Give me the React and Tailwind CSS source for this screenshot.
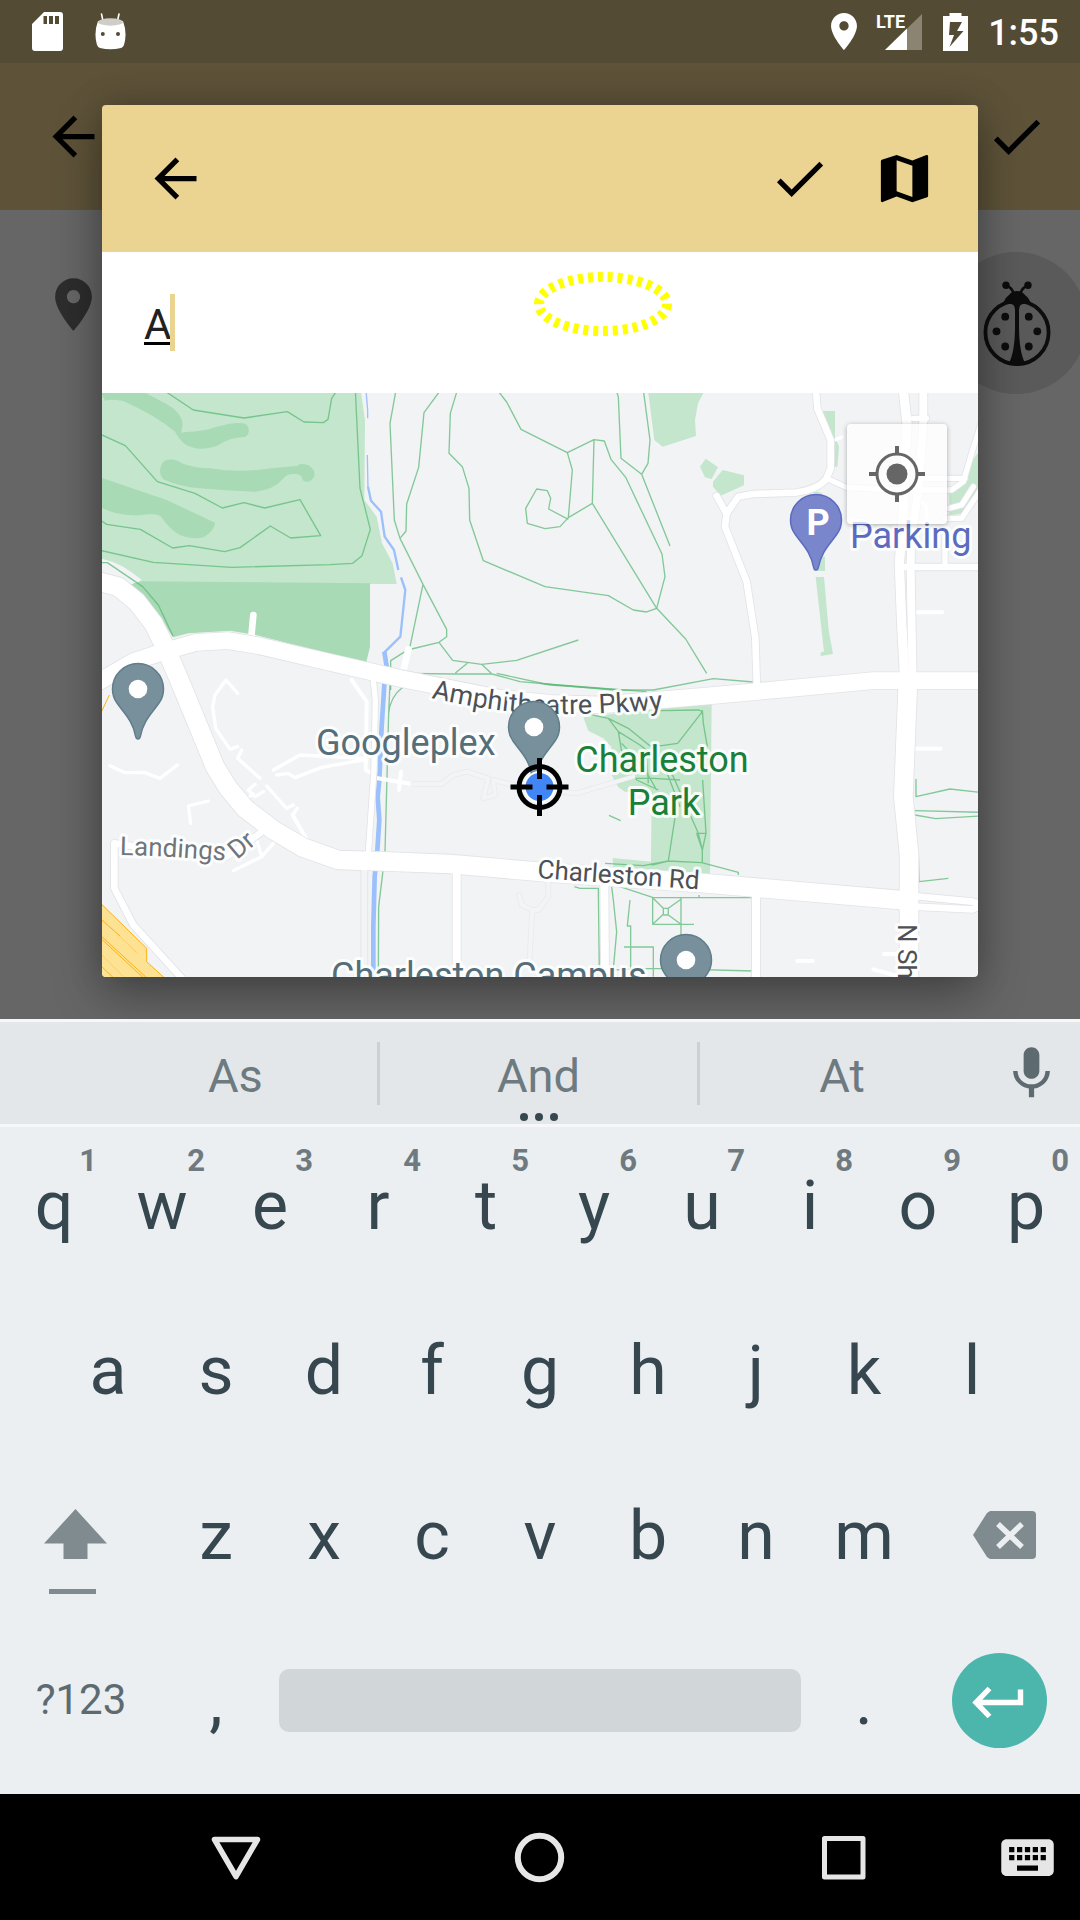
import React from "react";

const NW = "translate(-6 -9)";
const NE = "translate(1314 -9)";
const SW = "translate(-6 861)";
const SE = "translate(1314 861)";

function Icon({ d, className = "size-[63px]" }) {
  return (
    <svg viewBox="0 0 24 24" className={className} fill="currentColor" aria-hidden="true">
      <path d={d} />
    </svg>
  );
}

const ARROW = "M20 11H7.83l5.59-5.59L12 4l-8 8 8 8 1.41-1.41L7.83 13H20v-2z";
const CHECK = "M9 16.17L4.83 12l-1.42 1.41L9 19 21 7l-1.41-1.41z";
const MAP = "M20.5 3l-.16.03L15 5.1 9 3 3.36 4.9c-.21.07-.36.25-.36.48V20.5c0 .28.22.5.5.5l.16-.03L9 18.9l6 2.1 5.64-1.9c.21-.07.36-.25.36-.48V3.5c0-.28-.22-.5-.5-.5zM15 19l-6-2.11V5l6 2.11V19z";
const PLACE = "M12 2C8.13 2 5 5.13 5 9c0 5.25 7 13 7 13s7-7.75 7-13c0-3.87-3.13-7-7-7zm0 9.500c-1.38 0-2.5-1.12-2.5-2.5s1.12-2.5 2.5-2.5 2.5 1.12 2.5 2.5-1.12 2.5-2.5 2.5z";
const MIC = "M12 14c1.66 0 2.99-1.34 2.99-3L15 5c0-1.66-1.34-3-3-3S9 3.34 9 5v6c0 1.66 1.34 3 3 3zm5.3-3c0 3-2.54 5.1-5.3 5.1S6.7 14 6.7 11H5c0 3.41 2.72 6.23 6 6.72V21h2v-3.28c3.28-.48 6-3.3 6-6.72h-1.7z";
const KEYBOARD = "M20 5H4c-1.1 0-1.99.9-1.99 2L2 17c0 1.1.9 2 2 2h16c1.1 0 2-.9 2-2V7c0-1.1-.9-2-2-2zm-9 3h2v2h-2V8zm0 3h2v2h-2v-2zM8 8h2v2H8V8zm0 3h2v2H8v-2zm-1 2H5v-2h2v2zm0-3H5V8h2v2zm9 7H8v-2h8v2zm0-4h-2v-2h2v2zm0-3h-2V8h2v2zm3 3h-2v-2h2v2zm0-3h-2V8h2v2z";

function StatusBar() {
  return (
    <header className="flex h-[63px] items-center justify-between bg-[#544b35] pr-[21px] pl-8 text-white">
      <div className="flex items-center gap-8">
        <svg viewBox="0 0 31 39" className="h-[39px] w-[31px]" aria-hidden="true">
          <path fill="#fff" fillRule="evenodd" d="M12 0H28Q31 0 31 3V36Q31 39 28 39H3Q0 39 0 36V12ZM11.500 4V12H15V4ZM17 4V12H21V4ZM23 4V12H27V4Z" />
        </svg>
        <svg viewBox="0 0 31 37" className="h-[37px] w-[31px]" aria-hidden="true">
          <path d="M6.500 1L8 8M24 1L22.500 8" stroke="#fff" strokeWidth="1.600" strokeLinecap="round" />
          <path d="M3 8Q-1.500 20 2 32Q3 34.500 5 35Q15.500 37.500 26 35Q28 34.500 29 32Q32.500 20 28 8Z" fill="#fff" />
          <ellipse cx="15.500" cy="9" rx="12.500" ry="3.700" fill="#cfcdc7" />
          <circle cx="7.800" cy="21" r="2" fill="#544b35" />
          <circle cx="23" cy="21" r="2" fill="#544b35" />
        </svg>
      </div>
      <div className="flex items-center">
        <svg viewBox="5 2 14 20" className="mr-[19px] h-[37px] w-[26px]" aria-hidden="true">
          <path fill="#fff" d={PLACE} />
        </svg>
        <svg viewBox="0 0 46 38" className="mr-[21px] h-[38px] w-[46px]" aria-label="LTE signal">
          <path d="M46 1V37H9Z" fill="#8b8472" />
          <path d="M31 15.600V37H9Z" fill="#fff" />
          <text x="0" y="15" fontFamily="Roboto, sans-serif" fontWeight="700" fontSize="18" fill="#fff">LTE</text>
        </svg>
        <svg viewBox="0 0 25 38" className="mr-5 h-[38px] w-[25px]" aria-hidden="true">
          <path fill="#fff" fillRule="evenodd" d="M6.500 0H18.500V3H25V38H0V3H6.500ZM7 9L6 22H11L6.500 34L20.500 18H14L19 9Z" />
        </svg>
        <span className="pt-[3px] text-[36px] leading-none font-medium">1:55</span>
      </div>
    </header>
  );
}

function Ladybug() {
  return (
    <svg viewBox="-1 0 142 142" className="size-[142px]" aria-hidden="true">
      <g fill="#0d0d0d">
        <circle cx="71" cy="80.500" r="31.600" fill="none" stroke="#0d0d0d" strokeWidth="3.800" />
        <path d="M57 53Q58 46.500 63 43Q66 39 71 39Q76 39 79 43Q84 46.500 85 53Q79 50.500 74.500 53Q73 55 73 58V75Q73.200 100 79 111Q75 114 71 114Q67 114 63 111Q68.800 100 69 75V58Q69 55 67.500 53Q63 50.500 57 53Z" />
        <circle cx="60" cy="33.300" r="3.700" />
        <circle cx="82" cy="33.300" r="3.700" />
        <path d="M61 34Q66.500 36 67.500 42M81 34Q75.500 36 74.500 42" fill="none" stroke="#0d0d0d" strokeWidth="2.500" />
        <circle cx="59.200" cy="64.700" r="3.900" />
        <circle cx="82.800" cy="64.700" r="3.900" />
        <circle cx="50.500" cy="79.300" r="3.900" />
        <circle cx="91.300" cy="79.300" r="3.900" />
        <circle cx="59.200" cy="94.500" r="3.900" />
        <circle cx="82.800" cy="94.500" r="3.900" />
      </g>
    </svg>
  );
}

function PageBehind() {
  return (
    <div className="col-start-1 row-start-1 bg-[#666]">
      <div className="flex h-[147px] items-center justify-between bg-[#5e5339] pr-8 pl-[42px]">
        <button aria-label="Back"><Icon d={ARROW} /></button>
        <button aria-label="Done"><Icon d={CHECK} /></button>
      </div>
      <div className="flex items-start justify-between pt-[42px] pl-[42px]">
        <span className="mt-[21px] text-[#2d2d2d]"><Icon d={PLACE} /></span>
        <button aria-label="Add sighting" className="-mr-[7px] rounded-full bg-[#5a5a5a]"><Ladybug /></button>
      </div>
    </div>
  );
}

const parks = [
  [NW, "#c3e6cc", "M0 0H782L795 90L793 330L830 380L846 460L878 520L890 582H126L70 530L0 505Z"],
  [NW, "#a8dab5", "M90 582L126 574L810 580V770L798 820L465 734L390 722L265 730L219 742L170 665Z"],
  [NW, "#a8dab5", "M0 0H120L195 40Q245 65 248 105L243 128L260 126Q310 125 345 112Q400 96 430 100Q448 104 446 125Q444 142 425 142Q390 143 350 168Q300 185 260 166Q240 153 225 125Q165 75 70 33Q30 25 15 33Z"],
  [NW, "#a8dab5", "M200 210Q225 205 245 220Q285 235 330 235Q400 247 470 240Q530 233 590 228Q600 217 625 226Q648 240 642 260Q625 285 608 270Q605 250 585 252Q560 250 548 268Q520 300 465 305Q380 303 300 295Q240 290 195 270Q180 263 180 240Q185 213 200 210Z"],
  [NW, "#a8dab5", "M0 262L200 330L345 398Q345 420 310 442Q280 450 240 435Q210 420 182 378Q165 368 125 375Q50 380 0 350Z"],
  [NE, "#c3e6cc", "M324 0H495L474 40L465 90L468 138L368 170L343 150Z"],
  [NE, "#c3e6cc", "M497 206L534 232L515 267L495 262L480 230Z"],
  [NE, "#c3e6cc", "M548 240L612 256V286L542 317L519 290V275Z"],
  [NE, "#c3e6cc", "M847 63H885V140L897 170L892 230H884V160L870 140Z"],
  [NE, "#c3e6cc", "M825 500H855V543H820ZM827 561H852L866 720L879 792L842 798V787L852 785Z"],
  [NE, "#c3e6cc", "M815 310Q830 298 850 312ZM1228 310L1320 180V310L1265 370L1228 378Z"],
  [SE, "#c3e6cc", "M130 112L360 85L515 67L510 582L220 560L218 534L333 545L335 340L255 335L235 322L215 285L214 200L190 175L145 152Z"],
];

const trails = [
  [NW, "M190 0L280 60L432 84L562 65L612 96L670 98L684 88L695 25L712 0M766 0L780 295L811 418L786 497L758 520L690 524L395 532L160 517L0 481M0 132L76 167L172 275L285 310L367 354L432 338L494 354L600 329L662 437L572 444L511 408L420 473L374 485L268 467L218 474L121 418L20 403L0 390"],
  [NW, "M888 0L870 100L883 390L900 445L969 583L1040 718V740L1017 757L935 777M1022 0L972 68L956 232L920 342L918 423L900 445M969 583L930 770M1072 0L1051 70L1047 190L1087 230L1107 295L1109 390L1150 512L1335 590L1525 617L1600 660L1640 666L1670 655M1192 0L1220 36L1263 118L1402 188L1482 149M1017 757L1058 811L1145 823L1250 811L1435 750M1145 823L1176 852L1260 875L1540 900M1102 820L1066 849M920 850L1066 852L1176 852M915 785L872 812V900"],
  [NW, "M1402 188L1417 240L1405 383L1477 340L1482 149L1513 153L1533 208L1577 262L1686 492L1695 560L1670 655L1757 747L1820 850M1477 340L1670 655M1405 383L1380 410L1335 416L1282 400L1277 355L1310 297L1342 302L1352 325L1346 357L1405 388"],
  [NE, "M228 0L235 20L243 205L305 253L324 220L330 150L310 0M305 253L390 468M0 880L250 900L340 900L520 866L640 876"],
  [SW, "M870 10L866 100L855 515L848 580L836 680L835 890M866 100Q870 50 910 20M1190 -20L1350 15L1640 35"],
  [SE, "M110 95L205 115L265 145L345 210L400 290L475 460L487 510V550M205 115L235 155L300 195L370 250L420 380M235 155L245 215L290 300L355 330M245 190L310 260L350 330M290 295H340L420 300M320 235L325 310M325 195L365 197L413 190L487 95L477 90L360 92M487 90L490 130L502 200M488 300L498 460H470L487 510L498 460M407 400L385 543L335 555M195 550L310 557L385 543L485 548L595 577V585M103 620L120 625H175L178 880M215 620L220 660L230 755L218 890M240 620L340 653H640M270 660L262 738H272V870M338 653V733H462M423 655V800M338 653L370 685V703L338 733M423 658L385 685V705L423 733M370 685H385M370 705H385M252 801H340V890M215 870L340 865L640 873M477 655V645"],
  [SE, "M1128 297V350L1230 327L1320 337M1125 392L1320 397M1125 405L1187 416L1320 408M1135 520L1137 605L1225 595M207 406L242 422"],
];

const localRoads = [
  [SW, 10, "M413 40L378 0L345 45L338 80L347 145L390 208L413 200M425 210L413 235L480 295M500 318L560 385L580 375M592 385L578 405M465 313L445 330L465 350L490 335M440 357L460 342M30 257L75 278L132 277L180 295L232 255M325 363L265 378L272 430M520 270L600 225L790 235M530 285L565 280L585 293L665 262L790 240M400 572L485 530L520 490M485 530L470 480"],
  [SW, 12, "M578 405L630 495M755 0L800 65L797 270L825 285M825 293L935 312M903 275L897 330"],
  [NE, 10, "M872 155L905 142M1125 320L1160 350V430"],
  [NE, 12, "M1120 667H1207"],
  [SE, 12, "M1125 206H1202M772 843H818M1032 822H1080M1000 868L1080 890"],
  [NW, 20, "M460 675L453 750M925 778L905 865"],
];

const roads = [
  [SW, 12, "M940 312H1025L1060 285L1100 275L1165 295L1150 355L1185 345L1180 305M1180 300L1300 330M1330 330L1430 340L1600 290M1258 645L1265 675L1297 690L1288 850M1345 600V650L1315 690H1297"],
  [SW, 16, "M820 0L826 60L822 270L805 520"],
  [SW, 18, "M793 560V900"],
  [SW, 20, "M43 490V625L100 735L255 905M43 490L200 515L380 530L480 460"],
  [SW, 24, "M1070 560V900"],
  [NE, 20, "M828 0L832 55L872 150V235L858 268Q830 300 765 308L640 312L595 320L560 370L555 410L620 575L646 745L651 900M530 318L560 372"],
  [NE, 16, "M860 265L920 292L1080 300H1235L1270 275L1295 190L1325 95M1120 85H1160M1140 265H1275M1215 440V530M1225 355L1265 345L1300 290M1215 385H1265L1325 295"],
  [NE, 20, "M1080 531H1330"],
  [NE, 24, "M1150 0V95L1135 300L1113 450L1112 540L1118 880"],
  [NE, 28, "M1090 0L1101 100L1088 400L1078 520L1085 700L1095 880"],
  [SE, 24, "M193 610L195 900M648 640V900"],
  [SE, 20, "M1120 648L1298 665L1330 675M1120 680L1298 688L1330 675"],
  [SE, 56, "M1104 0L1090 350L1107 520V900"],
  [SW, 56, "M-20 -300L55 -280L110 -235L160 -170L195 -100L238 0L345 260L385 325L435 385L520 450L610 503L715 540L850 544L1050 552L1350 578L1820 610L2400 660"],
  [NW, 50, "M-20 885L100 815L200 782L290 757L385 752L480 768L680 815L900 865L1050 895L1200 925L1350 940L1500 945L1835 917L2040 898L2320 872L2660 872"],
];

function Pin({ x, y, fill = "#78909c", stroke = "#607d8b", children }) {
  return (
    <g transform={`translate(${x} ${y})`}>
      <path
        d="M0 50Q-2 50 -2.500 47C-5 32 -14 24 -21 14Q-25.500 8 -25.500 0A25.500 25.500 0 0 1 25.500 0Q25.500 8 21 14C14 24 5 32 2.500 47Q2 50 0 50Z"
        fill={fill}
        stroke={stroke}
        strokeWidth="1.500"
      />
      {children || <circle r="9.300" fill="#fff" />}
    </g>
  );
}

function MapView() {
  return (
    <div className="relative">
      <svg viewBox="0 0 876 584" className="block h-auto w-full" fontFamily="Roboto, sans-serif" role="img" aria-label="Map around Charleston Park">
        <rect width="876" height="584" fill="#f1f3f5" />
        <g transform="scale(0.33333)" fill="none" strokeLinejoin="round">
          {parks.map(([t, c, d], i) => <path key={i} transform={t} d={d} fill={c} />)}
          <path transform={NW} d="M0 505Q60 515 126 570L90 584L0 545Z" fill="#f1f3f5" />
          <g stroke="#9bc0fb">
            <path transform={NW} d="M798 0L803 60V85M802 195L804 295" strokeWidth="4" />
            <path transform={NW} d="M804 290L813 332L843 365L854 440L882 480L895 540M903 562L916 600L901 740L853 787" strokeWidth="7" />
            <path transform={SW} d="M853 -85L860 -40L853 15L845 140L838 300L833 350L838 420L832 510L824 590L820 740V900" strokeWidth="14" />
          </g>
          <g strokeWidth="4" stroke="#5dba78" strokeOpacity="0.75">
            {trails.map(([t, d], i) => <path key={i} transform={t} d={d} />)}
          </g>
          <g transform={SW}>
            <path d="M0 668L140 805V845L198 898H0Z" fill="#fde293" />
            <path d="M0 668L140 805V845L198 898M0 715L60 768M0 765L145 898M0 773L135 898M0 855L45 898M0 105L28 45" stroke="#fbb117" strokeWidth="3" />
            <path d="M50 760L110 818M0 820L70 890" stroke="#fbc34a" strokeWidth="2" />
          </g>
          <g stroke="#fff" strokeLinecap="round">
            {localRoads.map(([t, w, d], i) => <path key={i} transform={t} d={d} strokeWidth={w} />)}
          </g>
          <g stroke="#e2e3e7" strokeLinecap="round">
            {roads.map(([t, w, d], i) => (
              <path key={i} transform={t} d={d} strokeWidth={w + 5} strokeOpacity={i === 0 ? 0.5 : 1} />
            ))}
          </g>
          {roads.map(([t, w, d], i) => (
            <path key={i} transform={t} d={d} strokeWidth={w} strokeLinecap="round" stroke={i === 0 || i === 2 ? "#f3f4f6" : "#fff"} />
          ))}
          <path transform={NW} d="M0 518H22L128 590L175 645L219 738" stroke="#5dba78" strokeOpacity="0.75" strokeWidth="4" />
        </g>

        <defs>
          <path id="amphitheatre" d="M329 305Q395 320 445 321Q500 322 590 314" />
          <path id="landings" d="M18 462Q70 463 140 469" />
        </defs>
        <g stroke="#fff" strokeOpacity="0.85" strokeWidth="6" strokeLinejoin="round" paintOrder="stroke">
          <g fontSize="26" fill="#4d5156">
            <text fontSize="27"><textPath href="#amphitheatre">Amphitheatre Pkwy</textPath></text>
            <text transform="translate(435 485) rotate(4)">Charleston Rd</text>
            <text transform="translate(796 531) rotate(90)">N Sh</text>
            <text fill="#70757a"><textPath href="#landings">Landings</textPath></text>
            <text fill="#70757a" transform="translate(135 467) rotate(-40)">Dr</text>
          </g>
          <g fontSize="36">
            <text x="214" y="362" fill="#546e7a">Googleplex</text>
            <text x="229" y="595" fill="#546e7a">Charleston Campus</text>
            <text x="748" y="155" fill="#5c6bc0">Parking</text>
            <g fill="#188038" textAnchor="middle">
              <text x="560" y="379">Charleston</text>
              <text x="562" y="422">Park</text>
            </g>
          </g>
        </g>
        <Pin x={36} y={296} />
        <Pin x={432} y={334} />
        <Pin x={584} y={567} />
        <Pin x={714} y={127} fill="#7986cb" stroke="#5c6bc0">
          <text x="2" y="15" textAnchor="middle" fontSize="36" fontWeight="700" fill="#fff">P</text>
        </Pin>
        <g transform="translate(437.500 394)" fill="none">
          <circle r="16" fill="#fff" />
          <circle r="14" fill="#4285f4" />
          <circle r="20.500" stroke="#000" strokeWidth="5" />
          <path d="M0-29V-8M0 29V8M-29 0H-7M29 0H7" stroke="#000" strokeWidth="5" />
        </g>
      </svg>
      <button aria-label="My location" className="absolute top-[31px] right-[31px] flex size-[100px] items-center justify-center rounded-sm bg-white/75 shadow-[0_1px_5px_rgba(0,0,0,0.3)]">
        <svg viewBox="-28 -28 56 56" className="size-[56px]" fill="none" stroke="#666" aria-hidden="true">
          <circle r="20" strokeWidth="3" />
          <circle r="10.500" fill="#666" stroke="none" />
          <path d="M0-28V-19M0 28V19M-28 0H-19M28 0H19" strokeWidth="4" />
        </svg>
      </button>
    </div>
  );
}

function LocationDialog() {
  return (
    <div className="z-10 col-start-1 row-start-1 px-[102px] py-[42px]">
      <section role="dialog" aria-label="Choose location" className="rounded-[4px] shadow-[0_20px_50px_rgba(0,0,0,0.28),0_0_36px_rgba(0,0,0,0.2)]">
        <div className="flex h-[147px] items-center gap-[42px] rounded-t-[4px] bg-[#ebd392] px-[42px]">
          <button aria-label="Back" className="mr-auto"><Icon d={ARROW} /></button>
          <button aria-label="Confirm"><Icon d={CHECK} /></button>
          <button aria-label="Map"><Icon d={MAP} /></button>
        </div>
        <div className="relative h-[141px] bg-white">
          <input
            aria-label="Location name"
            defaultValue="A"
            className="h-full w-full bg-transparent px-[42px] pt-1 text-[42px] text-[#212121] underline decoration-black decoration-[3px] underline-offset-[3px] outline-none"
          />
          <span className="absolute top-[42px] left-[68px] h-[57px] w-[5px] bg-[#ebd392]" />
          <svg viewBox="0 0 140 64" className="absolute top-5 left-[431px] h-16 w-[140px]" aria-hidden="true">
            <ellipse cx="70" cy="32" rx="64" ry="27" fill="none" stroke="#ff0" strokeWidth="10" strokeDasharray="5 4.900" />
          </svg>
        </div>
        <div className="overflow-hidden rounded-b-[4px]"><MapView /></div>
      </section>
    </div>
  );
}

function Key({ children, hint }) {
  return (
    <button className="relative flex h-full min-w-0 flex-[2] items-center justify-center pb-[7px] text-[68px] leading-none text-[#37474f]">
      {children}
      {hint && <span className="absolute top-[18px] right-[11px] text-[31px] leading-none font-bold text-[#6e7a80]">{hint}</span>}
    </button>
  );
}

function Keyboard() {
  const side = "flex h-full min-w-0 flex-[3] items-center justify-center pb-[9px]";
  return (
    <section aria-label="Keyboard" className="bg-[#ebeff2]">
      <div className="flex h-[108px] items-center border-y-[3px] border-[#f5f7f9] bg-[#e3e7ea] pl-[94px] text-[47px] leading-none text-[#6d7a80]">
        <button className="h-full flex-[283] pt-1">As</button>
        <span className="h-[63px] w-[3px] bg-[#cbd0d3]" />
        <button className="relative h-full flex-[318] pt-1">
          And
          <svg viewBox="0 0 40 8" className="absolute bottom-[3px] left-1/2 h-2 w-10 -translate-x-1/2" fill="#37474f" aria-hidden="true">
            <circle cx="5" cy="4" r="4" /><circle cx="20" cy="4" r="4" /><circle cx="35" cy="4" r="4" />
          </svg>
        </button>
        <span className="h-[63px] w-[3px] bg-[#cbd0d3]" />
        <button className="h-full flex-[284] pt-1">At</button>
        <button aria-label="Voice input" className="mr-[17px] ml-4 text-[#5d6b71]"><Icon d={MIC} /></button>
      </div>
      <div className="flex h-[165px]">
        {[..."qwertyuiop"].map((k, i) => <Key key={k} hint={String((i + 1) % 10)}>{k}</Key>)}
      </div>
      <div className="flex h-[165px] px-[5%]">
        {[..."asdfghjkl"].map((k) => <Key key={k}>{k}</Key>)}
      </div>
      <div className="flex h-[165px]">
        <button aria-label="Shift" className={side}>
          <svg viewBox="0 0 63 134" className="mr-[11px] h-[134px] w-[63px]" fill="#808b8f" aria-hidden="true">
            <path d="M31.500 41L63 75.500H43.500V91H19.500V75.500H0ZM5 121H52V126H5Z" />
          </svg>
        </button>
        {[..."zxcvbnm"].map((k) => <Key key={k}>{k}</Key>)}
        <button aria-label="Delete" className={side}>
          <svg viewBox="0 0 63 48" className="ml-[11px] h-12 w-[63px]" aria-hidden="true">
            <path d="M17 0H59Q63 0 63 4V44Q63 48 59 48H17L14 46L0 24L14 2Z" fill="#808b8f" />
            <path d="M25 13L49 36M49 13L25 36" stroke="#ebeff2" strokeWidth="5.500" />
          </svg>
        </button>
      </div>
      <div className="flex h-[172px] pb-[7px]">
        <button className={side + " text-[42px] leading-none text-[#5d6b71]"}>?123</button>
        <Key>,</Key>
        <button aria-label="Space" className="flex h-full min-w-0 flex-[10] items-center pb-[9px]">
          <span className="mx-[9px] h-[63px] flex-1 rounded-[10px] bg-[#d1d6d9]" />
        </button>
        <Key>.</Key>
        <button aria-label="Enter" className={side}>
          <svg viewBox="0 0 95 95" className="size-[95px]" fill="none" aria-hidden="true">
            <circle cx="47.500" cy="47.500" r="47.500" fill="#4db6ac" />
            <path d="M37.500 35.500L24 49.500L37.500 63.500M24 49.500H68.500V36.500" stroke="#fff" strokeWidth="5.400" />
          </svg>
        </button>
      </div>
    </section>
  );
}

function NavBar() {
  return (
    <nav className="flex h-[126px] items-center bg-black pr-[21px] text-[#e6e6e6]">
      <span className="flex-[204]" />
      <button aria-label="Close keyboard">
        <svg viewBox="0 0 63 63" className="size-[63px]" fill="none" stroke="currentColor" strokeLinejoin="round" aria-hidden="true">
          <path d="M10.500 13.500H53.500L32 50.500Z" strokeWidth="5.500" />
        </svg>
      </button>
      <span className="flex-[241]" />
      <button aria-label="Home">
        <svg viewBox="0 0 63 63" className="size-[63px]" fill="none" stroke="currentColor" strokeWidth="6" aria-hidden="true">
          <circle cx="31.500" cy="31.500" r="21.700" />
        </svg>
      </button>
      <span className="flex-[241]" />
      <button aria-label="Overview">
        <svg viewBox="0 0 63 63" className="size-[63px]" fill="none" stroke="currentColor" strokeWidth="5" strokeLinejoin="round" aria-hidden="true">
          <rect x="12.500" y="12.500" width="38.500" height="38.500" />
        </svg>
      </button>
      <span className="flex-[121]" />
      <button aria-label="Switch keyboard"><Icon d={KEYBOARD} /></button>
    </nav>
  );
}

export default function App() {
  return (
    <div className="flex min-h-screen flex-col font-['Roboto',sans-serif]">
      <StatusBar />
      <main className="grid flex-1 grid-cols-1 overflow-hidden">
        <PageBehind />
        <LocationDialog />
      </main>
      <Keyboard />
      <NavBar />
    </div>
  );
}
